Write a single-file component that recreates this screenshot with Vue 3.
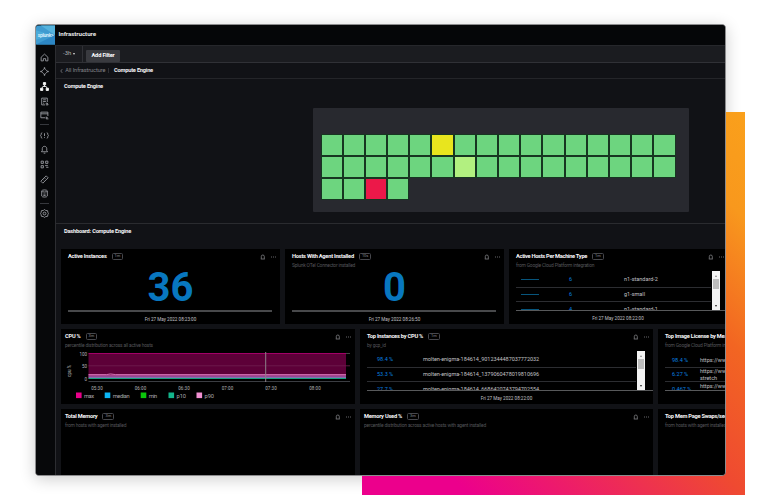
<script setup>
const cells = Array.from({ length: 36 }, (_, i) => {
  if (i === 5) return 'yellow'
  if (i === 22) return 'lime'
  if (i === 34) return 'red'
  return 'green'
})

const numberCards = [
  { title: 'Active Instances', chip: '1m', sub: '', value: '36', time: 'Fri 27 May 2022 08:23:00', tight: 'n1' },
  { title: 'Hosts With Agent Installed', chip: '10s', sub: 'Splunk OTel Connector installed', value: '0', time: 'Fri 27 May 2022 08:26:50', tight: 'n2' },
]
const machineRows = [
  { count: '6', name: 'n1-standard-2' },
  { count: '6', name: 'g1-small' },
  { count: '4', name: 'n1-standard-1' },
]
const instanceRows = [
  { pct: '98.4 %', name: 'molten-enigma-184614_9012344487037772032' },
  { pct: '53.3 %', name: 'molten-enigma-184614_1379060478019810696' },
  { pct: '27.7 %', name: 'molten-enigma-184614_6686420743794702554' },
]
const licenseRows = [
  { pct: '98.4 %', name: 'https://www.googleapis.com' },
  { pct: '6.27 %', name: 'https://www.googleapis.com', more: 'stretch' },
  { pct: '0.467 %', name: 'https://www.googleapis.com', more: 'xenial' },
]
const emptyCards = [
  { title: 'Total Memory', sub: 'from hosts with agent installed', chip: '3m' },
  { title: 'Memory Used %', sub: 'percentile distribution across active hosts with agent installed', chip: '3m' },
  { title: 'Top Mem Page Swaps/sec', sub: 'from hosts with agent installed', chip: '1m' },
]
const ticks = [
  { x: 36, label: '05:30' }, { x: 79.5, label: '06:00' }, { x: 123, label: '06:30' },
  { x: 166.5, label: '07:00' }, { x: 210, label: '07:30' }, { x: 254, label: '08:00' },
]
const legend = [
  { x: 15, label: 'max', color: '#e9008a', w: 10 }, { x: 43.7, label: 'median', color: '#0bb5f5', w: 17 },
  { x: 79.7, label: 'min', color: '#0bc80b', w: 8.5 }, { x: 107.5, label: 'p10', color: '#13b58b', w: 9.5 },
  { x: 135.5, label: 'p90', color: '#f190d2', w: 9.5 },
]
</script>

<template>
  <div class="stage">
    <div class="backdrop"></div>
    <div class="window">
      <header class="topbar">
        <div class="logo">
          <svg class="logo-bg" viewBox="0 0 20 20">
            <path d="M0 0H20V20H0z" fill="#3e9bd0" />
            <path d="M5 0L20 10V0z" fill="#55b3dd" />
            <path d="M0 20L20 10V20z" fill="#2c86c4" />
            <path d="M0 5L16 10L0 15z" fill="#53b6df" opacity=".6" />
          </svg>
          <span>splunk&gt;</span>
        </div>
        <div class="page-title">Infrastructure</div>
      </header>
      <div class="body">
        <nav class="side">
          <svg viewBox="0 0 16 16"><path d="M2 7.5L8 2l6 5.5V14h-4v-4H6v4H2z" /></svg>
          <svg viewBox="0 0 16 16"><path d="M5.5 5L8 2.5 10.500 5M11 5.500L13.500 8 11 10.500M10.500 11L8 13.500 5.500 11M5 10.500L2.500 8 5 5.500" /><circle cx="8" cy="2" r="1" /><circle cx="14" cy="8" r="1" /><circle cx="8" cy="14" r="1" /><circle cx="2" cy="8" r="1" /></svg>
          <svg class="on" viewBox="0 0 16 16"><path d="M6 1h4v4H6zM1 11h4v4H1zM11 11h4v4h-4z" fill="currentColor" /><path d="M8 5v3M3.500 11L5 8h6l1.500 3" /></svg>
          <svg viewBox="0 0 16 16"><path d="M13 9V2H3v12h6M5.500 5h5M5.500 8h5M5.500 11h2M10 12h4M12 10l2.500 4h-4" /></svg>
          <svg viewBox="0 0 16 16"><path d="M9 12H1.500V2H14v7M1.500 5H14M11 10v4h4M11 12h3" /></svg>
          <i class="sep"></i>
          <svg viewBox="0 0 16 16"><path d="M4 3C1 3 3 7 1 8c2 1 0 5 3 5M12 3c3 0 1 4 3 5-2 1 0 5-3 5M8 4v5M8 11v1.500" /></svg>
          <svg viewBox="0 0 16 16"><path d="M2.500 12L4 10V6.500C4 1 12 1 12 6.500V10l1.500 2zM6.500 14.500h3" /></svg>
          <svg viewBox="0 0 16 16"><path d="M2 2h4v4H2zM10 2h4v4h-4zM2 10h4v4H2zM9 10h5M11 13h4" /></svg>
          <svg viewBox="0 0 16 16"><path d="M1.500 11L11 1.500 14.500 5 5 14.500zM5 8l1.500 1.500M8 5l1.500 1.500" /></svg>
          <svg viewBox="0 0 16 16"><path d="M3 3.500C3 1 13 1 13 3.500v9c0 2.500-10 2.500-10 0zM3 3.500c0 2.500 10 2.500 10 0M6 9h4M6 11.500h4" /></svg>
          <i class="sep"></i>
          <svg viewBox="0 0 16 16"><path d="M8 1l2 1.500 3.500.5.500 3L15 8l-1 2-.5 3-3.500.5L8 15l-2-1.500-3.500-.5L2 10 1 8l1-2 .5-3L6 2.500z" /><circle cx="8" cy="8" r="2.500" /></svg>
        </nav>
        <main class="main">
          <div class="toolbar">
            <div class="range"><span>-3h</span><i class="caret"></i></div>
            <div class="filter">Add Filter</div>
          </div>
          <div class="crumbs">
            <svg viewBox="0 0 4 6"><path d="M3 .5L1 3l2 2.500" /></svg>
            <span class="parent">All Infrastructure</span>
            <i></i>
            <span class="current">Compute Engine</span>
          </div>
          <section class="mapzone">
            <h2>Compute Engine</h2>
            <div class="map">
              <div v-for="(c, i) in cells" :key="i" class="cell" :class="c"></div>
            </div>
          </section>
          <section class="dash">
            <h2 class="dash-title">Dashboard: Compute Engine</h2>
            <div class="row first">
              <article v-for="c in numberCards" :key="c.title" class="card" :class="c.tight">
                <div class="head"><b>{{ c.title }}</b><em>{{ c.chip }}</em>
                  <svg class="acts" viewBox="0 0 16 6"><path d="M1.300 4.500V2.500a1.500 1.500 0 013 0v2l.5.5H.8z" /><path d="M11 3h1M13 3h1M15 3h1" /></svg>
                </div>
                <div class="sub">{{ c.sub }}</div>
                <div class="big">{{ c.value }}</div>
                <div class="rule"></div>
                <div class="time">{{ c.time }}</div>
              </article>
              <article class="card n3">
                <div class="head"><b>Active Hosts Per Machine Type</b><em>1m</em>
                  <svg class="acts" viewBox="0 0 16 6"><path d="M1.300 4.500V2.500a1.500 1.500 0 013 0v2l.5.5H.8z" /><path d="M11 3h1M13 3h1M15 3h1" /></svg>
                </div>
                <div class="sub">from Google Cloud Platform integration</div>
                <div class="scroller">
                  <div class="rows machine">
                    <div v-for="r in machineRows" :key="r.name" class="tr"><i class="spark"></i><span class="val">{{ r.count }}</span><span class="name">{{ r.name }}</span></div>
                  </div>
                  <div class="bar"><i class="up"></i><i class="thumb"></i><i class="down"></i></div>
                </div>
                <div class="time">Fri 27 May 2022 08:22:00</div>
              </article>
            </div>
            <div class="row second">
              <article class="card cpu">
                <div class="head"><b>CPU %</b><em>3m</em>
                  <svg class="acts" viewBox="0 0 16 6"><path d="M1.300 4.500V2.500a1.500 1.500 0 013 0v2l.5.5H.8z" /><path d="M11 3h1M13 3h1M15 3h1" /></svg>
                </div>
                <div class="sub">percentile distribution across all active hosts</div>
                <svg class="chart" viewBox="0 0 294 56">
                  <rect x="27.500" y="5.500" width="257.500" height="25" fill="#5d0038" />
                  <path d="M27.500 5.500H285" stroke="#a30068" />
                  <path d="M285 5.500H289" stroke="#444" />
                  <path d="M27.500 17.800H289" stroke="#702052" stroke-width=".8" />
                  <rect x="27.500" y="26.500" width="257.500" height="2.200" fill="#a8408c" />
                  <rect x="27.500" y="28.500" width="257.500" height="1.800" fill="#8c6bb0" />
                  <rect x="27.500" y="30" width="257.500" height="1" fill="#16a07c" />
                  <path d="M27.500 26.600h18l4-.7 5 .7H285" fill="none" stroke="#e283c4" stroke-width=".8" />
                  <path d="M27.500 33.500H289" stroke="#3b3d42" stroke-width="1.200" />
                  <path d="M204.700 4v30" stroke="#8d8088" stroke-width="1" />
                  <g class="axis">
                    <text x="26" y="8.300" text-anchor="end">100</text>
                    <text x="26" y="20" text-anchor="end">50</text>
                    <text x="26" y="32.800" text-anchor="end">0</text>
                    <text transform="translate(10 29) rotate(-90)" textLength="12">cpu %</text>
                    <text v-for="t in ticks" :key="t.label" :x="t.x" y="41.800" text-anchor="middle" textLength="11.500">{{ t.label }}</text>
                  </g>
                  <g v-for="l in legend" :key="l.label" class="legend">
                    <rect :x="l.x" y="44.500" width="5.600" height="5.600" :fill="l.color" />
                    <text :x="l.x + 8" y="50.400" :textLength="l.w">{{ l.label }}</text>
                  </g>
                </svg>
              </article>
              <article class="card n5">
                <div class="head"><b>Top Instances by CPU %</b><em>1m</em>
                  <svg class="acts" viewBox="0 0 16 6"><path d="M1.300 4.500V2.500a1.500 1.500 0 013 0v2l.5.5H.8z" /><path d="M11 3h1M13 3h1M15 3h1" /></svg>
                </div>
                <div class="sub">by gcp_id</div>
                <div class="scroller">
                  <div class="rows inst">
                    <div v-for="r in instanceRows" :key="r.name" class="tr"><span class="val">{{ r.pct }}</span><span class="name">{{ r.name }}</span></div>
                  </div>
                  <div class="bar"><i class="up"></i><i class="thumb"></i><i class="down"></i></div>
                </div>
                <div class="time">Fri 27 May 2022 08:22:00</div>
              </article>
              <article class="card n6">
                <div class="head"><b>Top Image License by Mean CPU %</b></div>
                <div class="sub">from Google Cloud Platform integration</div>
                <div class="scroller">
                  <div class="rows lic">
                    <div v-for="r in licenseRows" :key="r.pct" class="tr"><span class="val">{{ r.pct }}</span><span class="name">{{ r.name }}<template v-if="r.more"><br>{{ r.more }}</template></span></div>
                  </div>
                </div>
              </article>
            </div>
            <div class="row third">
              <article v-for="(c, i) in emptyCards" :key="c.title" class="card" :class="'e' + i">
                <div class="head"><b>{{ c.title }}</b><em>{{ c.chip }}</em>
                  <svg class="acts" viewBox="0 0 16 6"><path d="M1.300 4.500V2.500a1.500 1.500 0 013 0v2l.5.5H.8z" /><path d="M11 3h1M13 3h1M15 3h1" /></svg>
                </div>
                <div class="sub">{{ c.sub }}</div>
              </article>
            </div>
          </section>
        </main>
      </div>
    </div>
  </div>
</template>

<style>
body { background: #fff; }
</style>

<style scoped>
* { box-sizing: border-box; }
i, em { font-style: normal; }
.stage { position: relative; width: 760px; height: 500px; padding: 24px 0 0 35px; overflow: hidden; font-family: Roboto, "Noto Sans", sans-serif; font-size: 5.700px; line-height: 7px; color: #e8e8ea; white-space: nowrap; }
.stage::before { content: ""; position: absolute; left: 35px; top: 24px; width: 691px; height: 452px; border-radius: 4px; box-shadow: 0 3px 16px rgba(0, 0, 0, .2); }
.backdrop { position: absolute; left: 362px; top: 112px; width: 383px; height: 383px; background: linear-gradient(45deg, #ec008c 0%, #ec008c 14%, #ef4a31 50%, #f26522 68%, #f8981d 86%, #faa01b 100%); }
.window { position: relative; width: 691px; height: 452px; border: 1px solid #8c8c8e; border-radius: 4px; overflow: hidden; background: #111216; }
.topbar { display: flex; height: 20px; background: #050608; }
.logo { position: relative; width: 19px; height: 20px; display: flex; align-items: center; justify-content: center; flex: none; }
.logo-bg { position: absolute; inset: 0; width: 19px; height: 20px; }
.logo span { position: relative; color: #e2f4fc; font-size: 5px; font-weight: 500; letter-spacing: -.25px; }
.page-title { padding: 6px 0 0 3.500px; font-size: 6.200px; font-weight: 700; letter-spacing: -.06px; }
.body { display: flex; height: 430px; }
.side { width: 20px; flex: none; background: #07080a; border-right: 1px solid #2c2d31; display: flex; flex-direction: column; align-items: center; padding: 7.500px 2px 0 0; }
.side svg { width: 9px; height: 9px; margin-bottom: 5.700px; flex: none; fill: none; stroke: currentColor; stroke-width: 1.500; color: #a0a2a8; }
.side svg.on { color: #fff; }
.sep { width: 9px; height: 1px; background: #36383d; margin: -1.500px 0 5.200px; flex: none; }
.main { width: 669px; min-width: 0; overflow: hidden; }
.toolbar { display: flex; height: 18px; background: #1b1c20; border-bottom: 1px solid #303136; border-top: 1px solid #26272b; }
.range { width: 27px; border-right: 1px solid #303136; display: flex; align-items: center; padding: 0 0 1px 7px; gap: 2px; color: #b4b5b9; font-size: 5.900px; }
.caret { border: 1.900px solid transparent; border-top: 2.400px solid #ddd; border-bottom: 0; }
.filter { margin: 4px 0 0 3px; width: 34px; height: 12px; border-radius: 1px; background: #393a3f; color: #fff; font-weight: 700; font-size: 5.700px; line-height: 11px; text-align: center; letter-spacing: -.18px; }
.crumbs { display: flex; align-items: center; height: 16px; border-bottom: 1px solid #242529; padding-left: 4px; }
.crumbs svg { width: 3px; height: 6px; fill: none; stroke: #a0a1a6; stroke-width: .8; }
.parent { width: 43px; padding-left: 2.200px; color: #85868c; font-size: 5.600px; letter-spacing: -.07px; }
.crumbs i { width: 1px; height: 5px; background: #303136; margin-left: 2px; }
.current { margin-left: 5px; font-weight: 700; font-size: 5.700px; color: #f3f3f5; letter-spacing: -.22px; }
h2 { margin: 0; font-size: 5.700px; line-height: 7px; font-weight: 700; color: #f5f5f7; letter-spacing: -.22px; }
.mapzone { height: 145px; padding: 4px 0 0 8px; border-bottom: 1px solid #2a2b2f; }
.map { width: 376px; height: 104px; margin: 18px 0 0 248.500px; background: #28292f; border-radius: 1px; display: grid; grid-template-columns: repeat(16, 20.200px); grid-auto-rows: 20px; column-gap: 2px; row-gap: 2.200px; padding: 27px 0 0 9px; }
.cell { outline: 1px solid #173621; }
.green { background: #6dd57f; }
.yellow { background: #e8e51e; }
.lime { background: #b2f080; }
.red { background: #ec1849; }
.dash { padding: 4px 0 0 5px; }
.dash-title { padding-left: 3px; margin-bottom: 14px; }
.row { display: grid; column-gap: 5px; margin-bottom: 5px; }
.first { grid-template-columns: repeat(3, 219px); grid-auto-rows: 75px; }
.second, .third { grid-template-columns: 294px 293px 294px; grid-auto-rows: 75px; }
.card { background: #000; padding: 4px 0 0 7px; overflow: hidden; }
.second .card, .third .card { padding-left: 4px; }
.second .n5, .second .n6 { padding-left: 7px; }
.third .e2 { padding-left: 7px; }
.head { display: flex; align-items: center; height: 7px; }
.head b { font-weight: 700; font-size: 5.700px; letter-spacing: -.24px; color: #f8f8fa; }
.n3 .head b { letter-spacing: -.3px; }
.head em { height: 6.500px; min-width: 10px; padding: 0 2px; margin-left: 5px; border: 1px solid #46474c; border-radius: 1.500px; font-size: 4px; line-height: 4.500px; text-align: center; color: #88898e; }
.acts { width: 16px; height: 6px; margin-left: auto; margin-right: 4px; fill: none; stroke: #808185; stroke-width: .8; }
.sub { height: 7px; margin-top: 1.500px; color: #55565a; font-size: 4.900px; line-height: 7px; letter-spacing: -.19px; }
.big { height: 40px; margin-top: 3px; line-height: 31px; font-size: 40px; font-weight: 700; color: #0877bf; text-align: center; padding-right: 7px; }
.rule { height: 1.500px; margin-top: -1.500px; width: 204px; background: #48494b; }
.time { height: 8px; margin-top: 4px; padding-right: 7px; text-align: center; font-size: 4.600px; color: #c0c1c5; line-height: 7px; }
.n3 .time { margin-top: 3.500px; padding-right: 8px; }
.scroller { display: flex; height: 40px; margin-top: 2.500px; padding-right: 8px; border-bottom: 1px solid #58595b; overflow: hidden; }
.rows { flex: 1; padding-top: 2px; font-size: 5.500px; }
.tr { display: grid; align-items: center; height: 14.700px; border-bottom: 1px solid #2c2d31; padding-left: 5px; color: #c0c1c5; }
.machine .tr { grid-template-columns: 48px 55px 1fr; }
.inst .tr { grid-template-columns: 46px 1fr; padding-left: 10px; }
.lic .tr { grid-template-columns: 28px 1fr; padding-left: 7px; line-height: 6.500px; }
.inst .name { letter-spacing: -.05px; }
.val { color: #0880e0; }
.spark { width: 18px; height: 1px; background: #07557c; }
.bar { width: 8px; flex: none; background: #f3f3f3; display: flex; flex-direction: column; align-items: center; margin-left: 1px; }
.up { margin-top: 4px; border: 1.500px solid transparent; border-bottom: 2px solid #888; border-top: 0; }
.down { margin: auto 0 3px; border: 1.500px solid transparent; border-top: 2px solid #222; border-bottom: 0; }
.thumb { width: 6px; height: 10px; margin-top: 2px; background: #bcbcbc; }
.chart { display: block; width: 294px; height: 56px; margin-left: -4px; margin-top: -.5px; }
.axis text { font-size: 4.500px; fill: #b4b5b9; }
.legend text { font-size: 5.700px; fill: #a8a9ad; }
</style>
